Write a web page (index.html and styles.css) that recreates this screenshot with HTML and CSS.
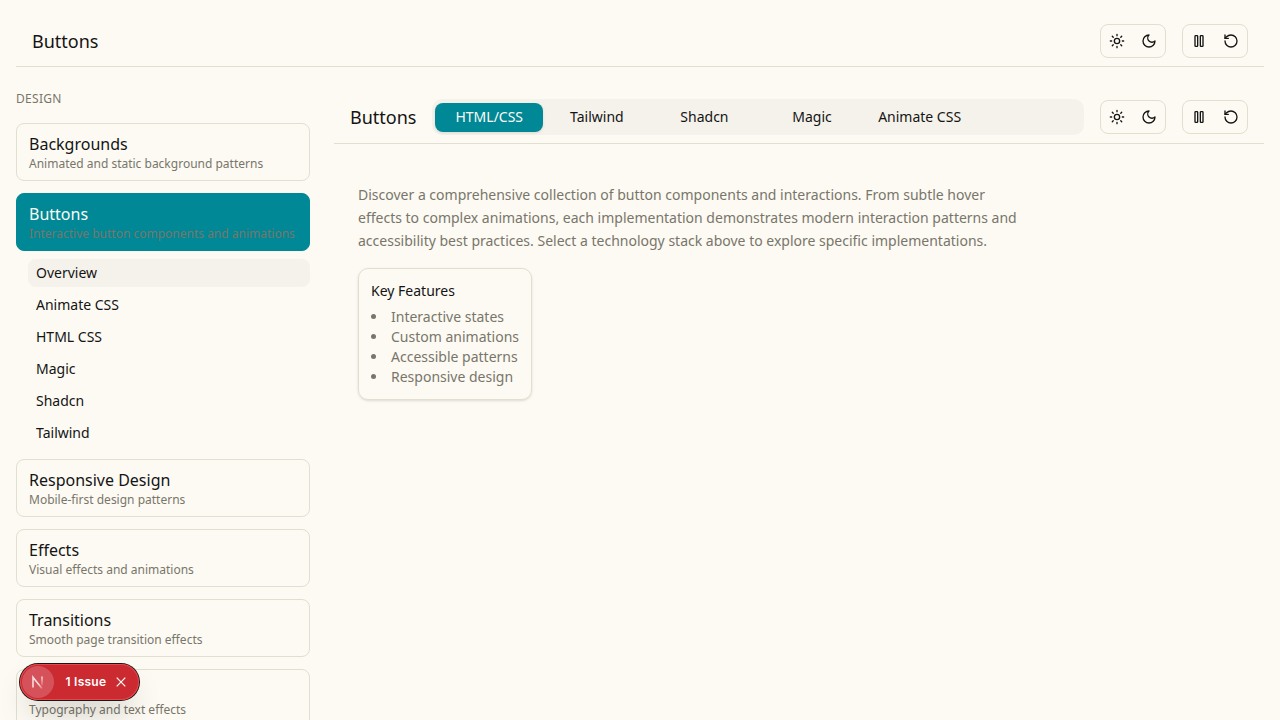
FILE: index.html
```html
<!DOCTYPE html>
<html lang="en">
<head>
<meta charset="utf-8">
<title>Buttons</title>
<link rel="stylesheet" href="styles.css">
</head>
<body>
<svg class="sprite" aria-hidden="true">
  <symbol id="sun" viewBox="0 0 24 24"><circle cx="12" cy="12" r="4"/><path d="M12 2v2M12 20v2M4.93 4.93l1.41 1.41M17.66 17.66l1.41 1.41M2 12h2M20 12h2M6.34 17.66l-1.41 1.41M19.07 4.93l-1.41 1.41"/></symbol>
  <symbol id="moon" viewBox="0 0 24 24"><path d="M12 3a6 6 0 0 0 9 9 9 9 0 1 1-9-9Z"/></symbol>
  <symbol id="pause" viewBox="0 0 24 24"><rect x="14" y="4" width="4" height="16" rx="1"/><rect x="6" y="4" width="4" height="16" rx="1"/></symbol>
  <symbol id="reset" viewBox="0 0 24 24"><path d="M3 12a9 9 0 1 0 9-9 9.75 9.75 0 0 0-6.74 2.74L3 8"/><path d="M3 3v5h5"/></symbol>
</svg>
<header class="bar page-bar">
  <h1 class="title">Buttons</h1>
  <div class="controls">
    <div class="group"><button class="icon-btn"><svg class="icon"><use href="#sun"/></svg></button><button class="icon-btn"><svg class="icon"><use href="#moon"/></svg></button></div>
    <div class="group"><button class="icon-btn"><svg class="icon"><use href="#pause"/></svg></button><button class="icon-btn"><svg class="icon"><use href="#reset"/></svg></button></div>
  </div>
</header>
<div class="layout">
  <aside class="sidebar">
    <div class="section-label">DESIGN</div>
    <nav class="nav">
      <a class="card"><span class="card-title">Backgrounds</span><span class="card-desc">Animated and static background patterns</span></a>
      <div>
        <a class="card active"><span class="card-title">Buttons</span><span class="card-desc">Interactive button components and animations</span></a>
        <div class="subnav">
          <a class="sub current">Overview</a>
          <a class="sub">Animate CSS</a>
          <a class="sub">HTML CSS</a>
          <a class="sub">Magic</a>
          <a class="sub">Shadcn</a>
          <a class="sub">Tailwind</a>
        </div>
      </div>
      <a class="card"><span class="card-title">Responsive Design</span><span class="card-desc">Mobile-first design patterns</span></a>
      <a class="card"><span class="card-title">Effects</span><span class="card-desc">Visual effects and animations</span></a>
      <a class="card"><span class="card-title">Transitions</span><span class="card-desc">Smooth page transition effects</span></a>
      <a class="card"><span class="card-title">Text</span><span class="card-desc">Typography and text effects</span></a>
    </nav>
  </aside>
  <main class="main">
    <div class="bar section-bar">
      <h2 class="title">Buttons</h2>
      <div class="tabs">
        <button class="tab selected">HTML/CSS</button>
        <button class="tab">Tailwind</button>
        <button class="tab">Shadcn</button>
        <button class="tab">Magic</button>
        <button class="tab">Animate CSS</button>
      </div>
      <div class="controls">
        <div class="group"><button class="icon-btn"><svg class="icon"><use href="#sun"/></svg></button><button class="icon-btn"><svg class="icon"><use href="#moon"/></svg></button></div>
        <div class="group"><button class="icon-btn"><svg class="icon"><use href="#pause"/></svg></button><button class="icon-btn"><svg class="icon"><use href="#reset"/></svg></button></div>
      </div>
    </div>
    <div class="content">
      <p class="intro">Discover a comprehensive collection of button components and interactions. From subtle hover effects to complex animations, each implementation demonstrates modern interaction patterns and accessibility best practices. Select a technology stack above to explore specific implementations.</p>
      <section class="features">
        <h3 class="features-title">Key Features</h3>
        <ul class="features-list">
          <li>Interactive states</li>
          <li>Custom animations</li>
          <li>Accessible patterns</li>
          <li>Responsive design</li>
        </ul>
      </section>
    </div>
  </main>
</div>
<div class="issue">
  <span class="issue-logo"><svg width="16" height="16" viewBox="0 0 16 16" fill="none" stroke-width="1.6"><defs><linearGradient id="fade-a" x1="3" y1="2" x2="13" y2="15" gradientUnits="userSpaceOnUse"><stop offset=".6" stop-color="#fff" stop-opacity=".8"/><stop offset="1" stop-color="#fff" stop-opacity=".1"/></linearGradient><linearGradient id="fade-b" x1="0" y1="2" x2="0" y2="12" gradientUnits="userSpaceOnUse"><stop offset="0" stop-color="#fff" stop-opacity=".8"/><stop offset="1" stop-color="#fff" stop-opacity=".1"/></linearGradient></defs><path stroke="url(#fade-a)" d="M3 13.6V3.2L12 14.6"/><path stroke="url(#fade-b)" d="M12 2.4v9"/></svg></span>
  <span class="issue-text">1 Issue</span>
  <svg class="issue-close" width="10" height="10" viewBox="0 0 10 10"><path d="M.7.7l8.6 8.6M9.3.7L.7 9.3"/></svg>
</div>
</body>
</html>
```
FILE: styles.css
```css
* { box-sizing: border-box; }
body {
  margin: 0;
  padding: 16px;
  height: 720px;
  overflow: hidden;
  background: #fdfaf3;
  color: #141414;
  font: 14px/20px "Noto Sans", sans-serif;
}
h1, h2, h3, p, ul { margin: 0; padding: 0; font-weight: 400; }
button { margin: 0; padding: 0; border: 0; background: none; color: inherit; font: inherit; }
.sprite { display: none; }
.bar {
  display: flex;
  align-items: center;
  gap: 16px;
  height: 51px;
  padding: 0 16px;
  border-bottom: 1px solid #e1dfcf;
}
.page-bar { justify-content: space-between; }
.section-bar { padding-bottom: 2px; }
.title { font-size: 18px; line-height: 28px; }
.controls { display: flex; gap: 16px; }
.group {
  display: flex;
  width: 66px;
  height: 34px;
  border: 1px solid #e1dfcf;
  border-radius: 8px;
}
.icon-btn { display: flex; align-items: center; justify-content: center; width: 32px; height: 32px; }
.icon { width: 16px; height: 16px; fill: none; stroke: currentColor; stroke-width: 2; stroke-linecap: round; stroke-linejoin: round; }
.layout { display: grid; grid-template-columns: 294px 1fr; gap: 24px; padding-top: 24px; }
.section-label { color: #78766a; font-size: 12px; line-height: 16px; letter-spacing: 0.3px; }
.nav { display: flex; flex-direction: column; gap: 12px; margin-top: 16px; }
.card {
  display: flex;
  flex-direction: column;
  height: 58px;
  padding: 8px 12px;
  border: 1px solid #e1dfcf;
  border-radius: 8px;
}
.card-title { font-size: 16px; line-height: 24px; }
.card-desc { color: #78766a; font-size: 12px; line-height: 16px; white-space: nowrap; }
.active { background: #008897; border-color: #008897; color: #fdfaf3; }
.subnav { display: flex; flex-direction: column; gap: 4px; margin: 8px 0 0 12px; }
.sub { padding: 4px 8px; border-radius: 8px; }
.current { background: #f5f2eb; }
.main { padding-top: 2px; }
.tabs {
  flex: 1;
  display: grid;
  grid-template-columns: repeat(6, 1fr);
  align-items: center;
  height: 36px;
  padding: 3px;
  border-radius: 10px;
  background: #f5f2eb;
}
.tab { height: 29px; border-radius: 8px; }
.selected { background: #008897; color: #fdfaf3; box-shadow: 0 1px 3px #0000001a; }
.content { padding: 40px 24px; }
.intro { max-width: 672px; color: #78766a; line-height: 22.75px; }
.features {
  width: fit-content;
  margin-top: 16px;
  padding: 12px;
  border: 1px solid #e1dfcf;
  border-radius: 10px;
  box-shadow: 0 1px 3px #0000001a, 0 1px 2px -1px #0000001a;
}
.features-title { font-size: 14px; line-height: 20px; }
.features-list { margin-top: 6px; color: #78766a; list-style: disc inside; }
.issue {
  position: absolute;
  left: 20px;
  top: 664px;
  display: flex;
  align-items: center;
  width: 119px;
  height: 36px;
  padding-left: 2px;
  border-radius: 18px;
  background: #ca2a30;
  color: #fff;
  box-shadow: 0 0 0 1px #171717, inset 0 0 0 1px #e5484d, 0 16px 32px -8px #0000003d;
}
.issue-logo { display: flex; align-items: center; justify-content: center; width: 32px; height: 32px; border-radius: 50%; background: #d6525a; }
.issue-text { width: 42px; margin-left: 11.5px; font: 600 12px/20px Inter, sans-serif; letter-spacing: 0.25px; white-space: nowrap; }
.issue-close { margin-left: 8.5px; stroke: #fff; stroke-width: 1.2; }
```
